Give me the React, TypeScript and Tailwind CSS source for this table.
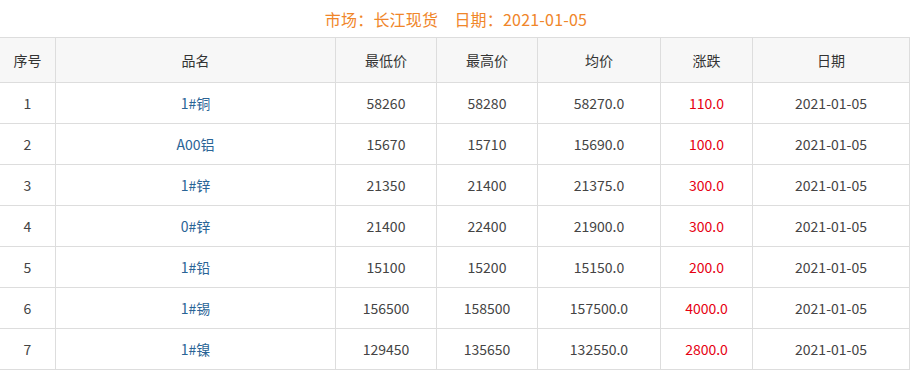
import React from 'react';

// 长江现货 行情表
const ROWS = [
  { id: 1, name: '1#铜', low: '58260', high: '58280', avg: '58270.0', change: '110.0' },
  { id: 2, name: 'A00铝', low: '15670', high: '15710', avg: '15690.0', change: '100.0' },
  { id: 3, name: '1#锌', low: '21350', high: '21400', avg: '21375.0', change: '300.0' },
  { id: 4, name: '0#锌', low: '21400', high: '22400', avg: '21900.0', change: '300.0' },
  { id: 5, name: '1#铅', low: '15100', high: '15200', avg: '15150.0', change: '200.0' },
  { id: 6, name: '1#锡', low: '156500', high: '158500', avg: '157500.0', change: '4000.0' },
  { id: 7, name: '1#镍', low: '129450', high: '135650', avg: '132550.0', change: '2800.0' },
];

const COLS = [
  { label: '序号', w: 'w-[56px]' },
  { label: '品名', w: 'w-[280px]' },
  { label: '最低价', w: 'w-[101px]' },
  { label: '最高价', w: 'w-[101px]' },
  { label: '均价', w: 'w-[123px]' },
  { label: '涨跌', w: 'w-[92px]' },
  { label: '日期', w: 'w-[157px]' },
];

const cell = 'border border-[#dddddd] text-center align-middle';

export default function App() {
  return (
    <div
      className="w-[912px] h-[370px] bg-white overflow-hidden text-[14px] text-[#444]"
      style={{ fontFamily: '"Microsoft YaHei", "Noto Sans CJK SC", sans-serif' }}
    >
      {/* 标题 */}
      <div className="h-[37px] flex items-center justify-center text-[16px] text-[#f0862a] tracking-[0.2px]">
        市场：长江现货　日期：2021-01-05
      </div>

      <table className="w-[910px] border-collapse table-fixed -ml-px">
        <thead>
          <tr className="h-[45px] bg-[#f7f7f7]">
            {COLS.map((c) => (
              <th key={c.label} className={`${cell} ${c.w} font-normal text-[#333]`}>
                {c.label}
              </th>
            ))}
          </tr>
        </thead>
        <tbody>
          {ROWS.map((r) => (
            <tr key={r.id} className="h-[41px]">
              <td className={cell}>{r.id}</td>
              <td className={`${cell} text-[#2a6496]`}>{r.name}</td>
              <td className={cell}>{r.low}</td>
              <td className={cell}>{r.high}</td>
              <td className={cell}>{r.avg}</td>
              <td className={`${cell} text-[#e60012]`}>{r.change}</td>
              <td className={cell}>2021-01-05</td>
            </tr>
          ))}
        </tbody>
      </table>
    </div>
  );
}
